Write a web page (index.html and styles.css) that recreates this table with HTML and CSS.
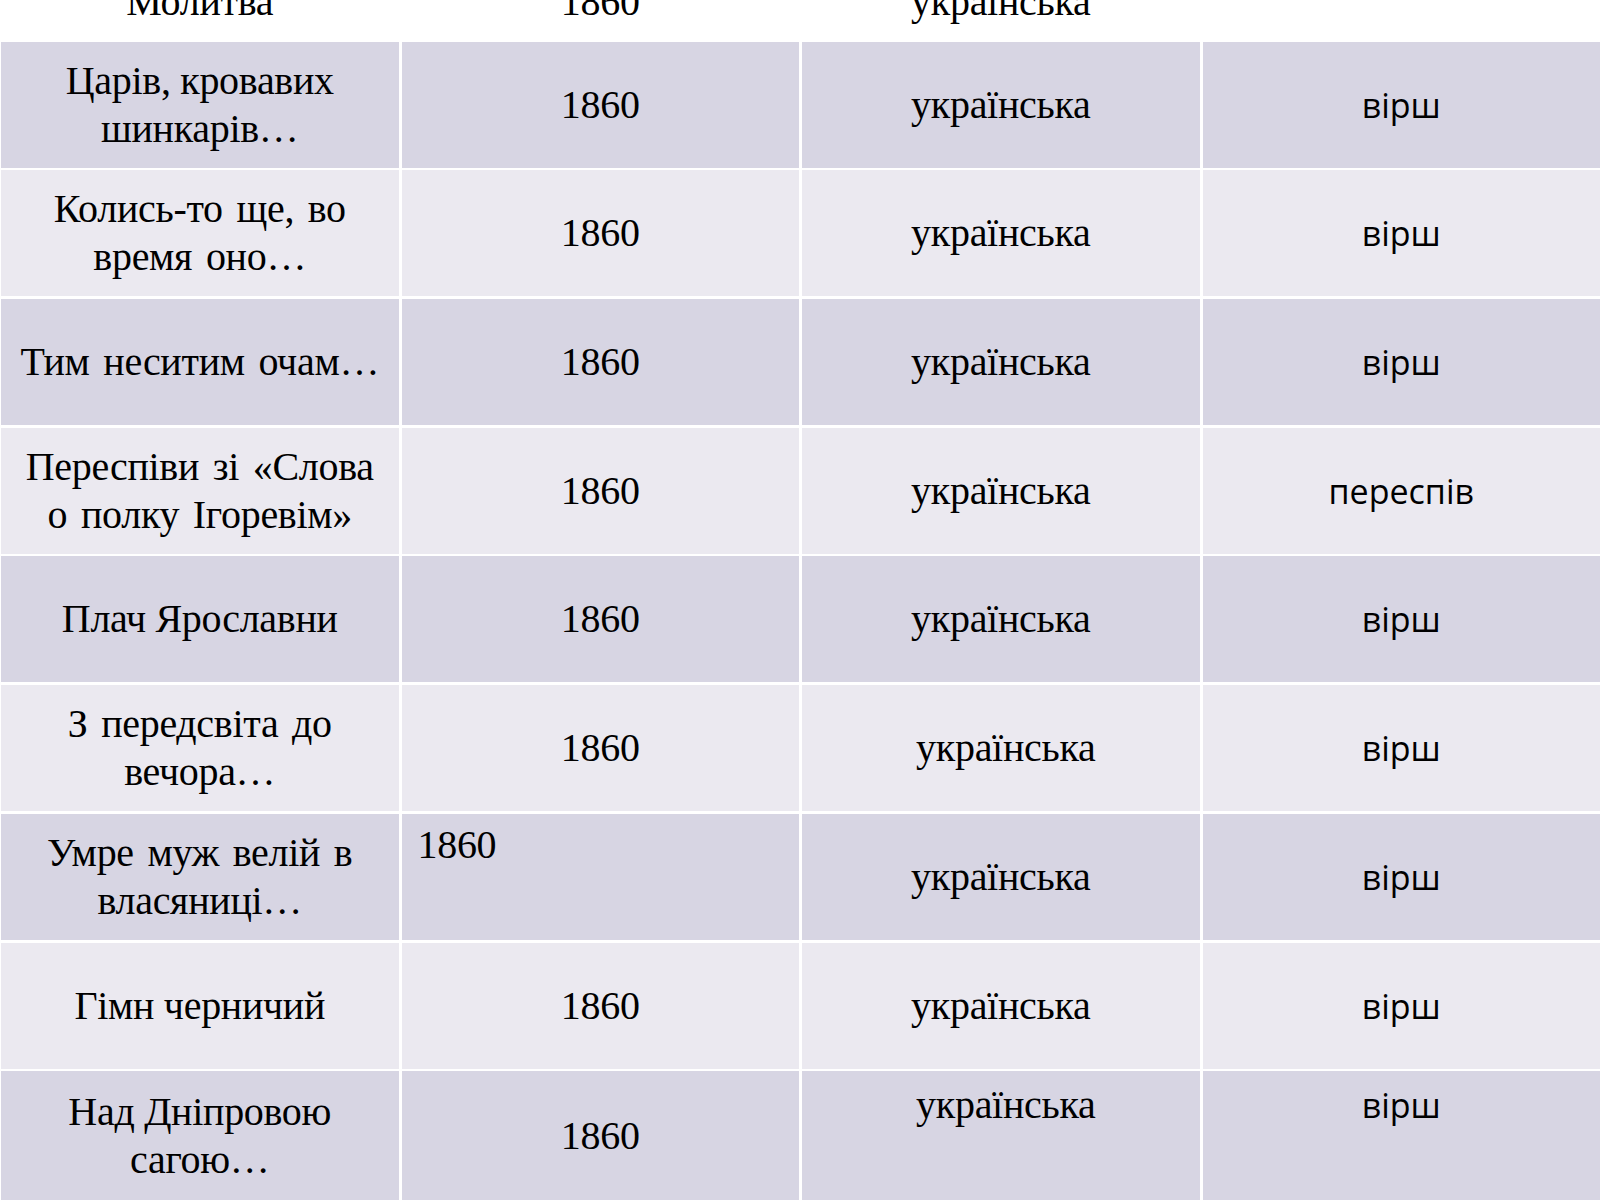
FILE: index.html
```html
<!DOCTYPE html>
<html lang="uk">
<head>
<meta charset="utf-8">
<title>Твори 1860</title>
<link rel="stylesheet" href="styles.css">
</head>
<body>
<div class="table">
  <div class="row row-top">
    <div class="cell"><span class="cut">Молитва</span></div>
    <div class="cell"><span class="cut">1860</span></div>
    <div class="cell"><span class="cut">українська</span></div>
    <div class="cell"></div>
  </div>
  <div class="row dark">
    <div class="cell">Царів, кровавих<br>шинкарів…</div>
    <div class="cell">1860</div>
    <div class="cell">українська</div>
    <div class="cell sans">вірш</div>
  </div>
  <div class="row light">
    <div class="cell wide">Колись-то ще, во<br>время оно…</div>
    <div class="cell">1860</div>
    <div class="cell">українська</div>
    <div class="cell sans">вірш</div>
  </div>
  <div class="row dark">
    <div class="cell wide">Тим неситим очам…</div>
    <div class="cell">1860</div>
    <div class="cell">українська</div>
    <div class="cell sans">вірш</div>
  </div>
  <div class="row light">
    <div class="cell wide">Переспіви зі «Слова<br>о полку Ігоревім»</div>
    <div class="cell">1860</div>
    <div class="cell">українська</div>
    <div class="cell sans">переспів</div>
  </div>
  <div class="row dark">
    <div class="cell">Плач Ярославни</div>
    <div class="cell">1860</div>
    <div class="cell">українська</div>
    <div class="cell sans">вірш</div>
  </div>
  <div class="row light">
    <div class="cell wide">З передсвіта до<br>вечора…</div>
    <div class="cell">1860</div>
    <div class="cell shift">українська</div>
    <div class="cell sans">вірш</div>
  </div>
  <div class="row dark">
    <div class="cell wide">Умре муж велій в<br>власяниці…</div>
    <div class="cell top-left">1860</div>
    <div class="cell">українська</div>
    <div class="cell sans">вірш</div>
  </div>
  <div class="row light">
    <div class="cell">Гімн черничий</div>
    <div class="cell">1860</div>
    <div class="cell">українська</div>
    <div class="cell sans">вірш</div>
  </div>
  <div class="row dark row-last">
    <div class="cell">Над Дніпровою<br>сагою…</div>
    <div class="cell">1860</div>
    <div class="cell shift top">українська</div>
    <div class="cell sans top">вірш</div>
  </div>
</div>
</body>
</html>
```

FILE: styles.css
```css
html, body {
  margin: 0;
  padding: 0;
  background: #ffffff;
  overflow: hidden;
}

body {
  width: 1600px;
  height: 1200px;
  font-family: "Liberation Serif", "Times New Roman", serif;
  color: #000000;
}

.table {
  display: flex;
  flex-direction: column;
  gap: 2.7px;
  padding-left: 1px;
}

.row {
  display: grid;
  grid-template-columns: repeat(4, 1fr);
  column-gap: 3px;
  height: 126px;
}

.row-top {
  height: 39px;
  overflow: hidden;
}

.row-last {
  height: 130px;
}

.cell {
  display: flex;
  align-items: center;
  justify-content: center;
  text-align: center;
  font-size: 40px;
  line-height: 48px;
  letter-spacing: -0.3px;
}

.wide {
  word-spacing: 4px;
}

.dark .cell {
  background: #d7d5e3;
}

.light .cell {
  background: #ebe9f0;
}

.row-top .cell {
  background: #ffffff;
  align-items: flex-start;
}

.cut {
  display: block;
  margin-top: -22px;
}

.sans {
  font-family: "Open Sans", "Liberation Sans", sans-serif;
  font-size: 34px;
  letter-spacing: 0;
}

.shift {
  padding-left: 10px;
}

.top {
  align-items: flex-start;
  padding-top: 10px;
}

.top-left {
  align-items: flex-start;
  justify-content: flex-start;
  padding-top: 7px;
  padding-left: 16px;
}
```
